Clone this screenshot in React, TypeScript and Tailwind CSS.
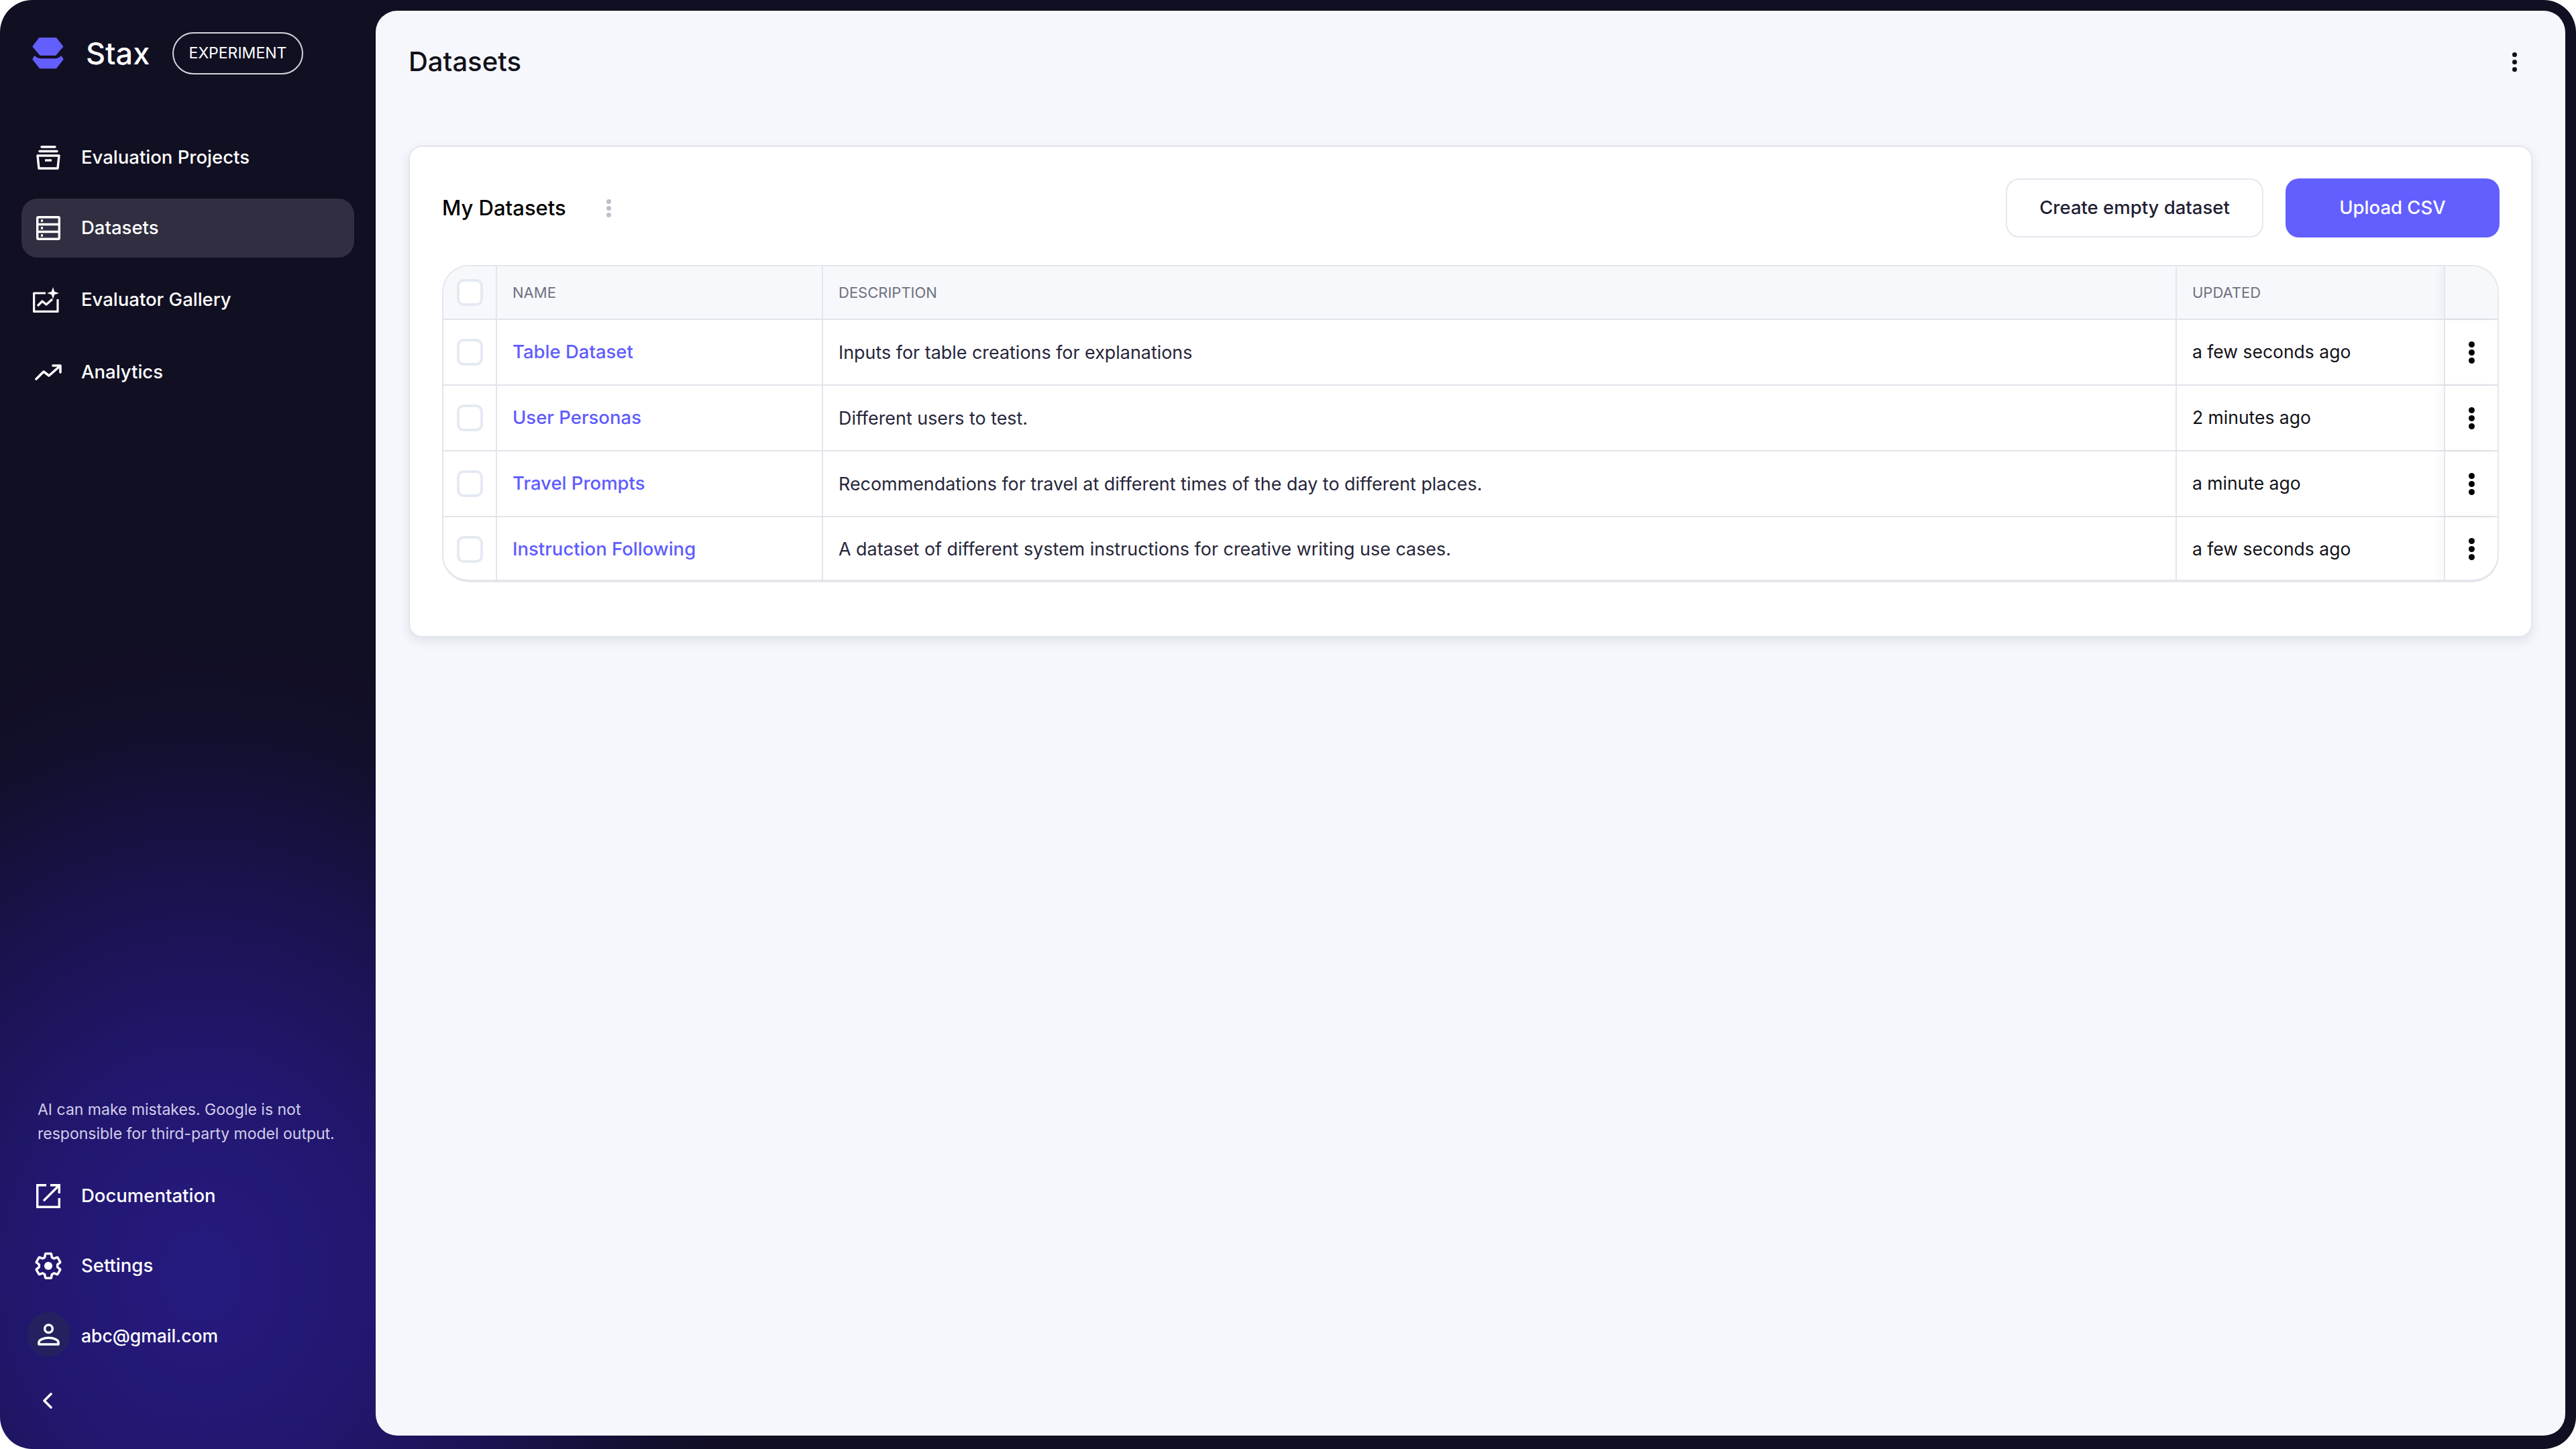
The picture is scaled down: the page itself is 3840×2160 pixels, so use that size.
const font = "font-['Inter','Liberation_Sans',sans-serif]";

const rows = [
  { name: 'Table Dataset', desc: 'Inputs for table creations for explanations', updated: 'a few seconds ago' },
  { name: 'User Personas', desc: 'Different users to test.', updated: '2 minutes ago' },
  { name: 'Travel Prompts', desc: 'Recommendations for travel at different times of the day to different places.', updated: 'a minute ago' },
  { name: 'Instruction Following', desc: 'A dataset of different system instructions for creative writing use cases.', updated: 'a few seconds ago' },
];

const Logo = () => (
  <svg width="47" height="47" viewBox="0 0 140 140" fill="#635ffe" stroke="#635ffe" strokeWidth="4" strokeLinejoin="round">
    <path d="M32 2H106L136 40L104 78H36L3 40Z" />
    <path d="M10 83C20 92 28 95 38 95H100C110 95 120 92 128 83L137 96L106 136H34L3 96Z" />
  </svg>
);

const ProjectsIcon = () => (
  <svg width="36" height="36" viewBox="0 0 36 36" fill="none" stroke="white" strokeWidth="3.4" strokeLinejoin="round">
    <path d="M8 2H28" strokeLinecap="round" />
    <path d="M5 8.5H31" strokeLinecap="round" />
    <path d="M2 15H34L32 34H4Z" />
    <path d="M13 22H23" />
  </svg>
);

const DatasetsIcon = () => (
  <svg width="36" height="36" viewBox="0 0 36 36" fill="none" stroke="white" strokeWidth="3.4">
    <rect x="1.7" y="1.7" width="32.6" height="32.6" rx="1.5" />
    <path d="M2 12.5H34M2 23.5H34" />
    <path d="M7 7H10M7 18H10M7 29H10" />
  </svg>
);

const GalleryIcon = () => (
  <svg width="40" height="38" viewBox="0 0 40 38" fill="none" stroke="white" strokeWidth="3.2" strokeLinejoin="round" className="-translate-x-[3px]">
    <path d="M19 9H1.6V36.4H37V18" />
    <path d="M7 28L14 21L20 26L29 18" />
    <path d="M30 0L32.2 6.8L39 9L32.2 11.2L30 18L27.8 11.2L21 9L27.8 6.8Z" fill="white" stroke="none" />
  </svg>
);

const AnalyticsIcon = () => (
  <svg width="40" height="24" viewBox="0 0 40 24" fill="none" stroke="white" strokeWidth="3.6" strokeLinecap="round" strokeLinejoin="round">
    <path d="M2 22L13 11L21 17L37 3" />
    <path d="M27 2H38V12" />
  </svg>
);

const DocsIcon = () => (
  <svg width="36" height="36" viewBox="0 0 36 36" fill="none" stroke="white" strokeWidth="3.4">
    <path d="M15 1.7H1.7V34.3H34.3V21" />
    <path d="M12 24L32 4" strokeLinecap="round" />
    <path d="M21 1.7H34.3V14" />
  </svg>
);

const SettingsIcon = () => (
  <svg width="40" height="40" viewBox="1.5 1.5 21 21" fill="none" stroke="white" strokeWidth="1.8" strokeLinejoin="round">
    <path d="M19.14 12.94c.04-.3.06-.61.06-.94 0-.32-.02-.64-.07-.94l2.03-1.58a.49.49 0 0 0 .12-.61l-1.92-3.32a.488.488 0 0 0-.59-.22l-2.39.96c-.5-.38-1.03-.7-1.62-.94l-.36-2.54a.484.484 0 0 0-.48-.41h-3.84c-.24 0-.43.17-.47.41l-.36 2.54c-.59.24-1.13.57-1.62.94l-2.39-.96c-.22-.08-.47 0-.59.22L2.74 8.87c-.12.21-.08.47.12.61l2.03 1.58c-.05.3-.09.63-.09.94s.02.64.07.94l-2.03 1.58a.49.49 0 0 0-.12.61l1.92 3.32c.12.22.37.29.59.22l2.39-.96c.5.38 1.03.7 1.62.94l.36 2.54c.05.24.24.41.48.41h3.84c.24 0 .44-.17.47-.41l.36-2.54c.59-.24 1.13-.56 1.62-.94l2.39.96c.22.08.47 0 .59-.22l1.92-3.32c.12-.22.07-.47-.12-.61l-2.01-1.58z" />
    <circle cx="12" cy="12" r="3.2" fill="white" stroke="none" />
  </svg>
);

const UserIcon = () => (
  <svg width="33" height="33" viewBox="0 0 34 34" fill="none" stroke="white" strokeWidth="3.6">
    <circle cx="17" cy="8" r="6" />
    <path d="M2 32V29C2 25 9 22 17 22C25 22 32 25 32 29V32Z" strokeLinejoin="round" />
  </svg>
);

const Chevron = () => (
  <svg width="16" height="24" viewBox="0 0 16 24" fill="none" stroke="white" strokeWidth="3.6" strokeLinecap="round" strokeLinejoin="round">
    <path d="M13 2L3 12L13 22" />
  </svg>
);

const Dots = ({ size, gap, color }: { size: string; gap: string; color: string }) => (
  <div className={`flex flex-col items-center ${gap}`}>
    <span className={`block rounded-full ${size} ${color}`} />
    <span className={`block rounded-full ${size} ${color}`} />
    <span className={`block rounded-full ${size} ${color}`} />
  </div>
);

const NavItem = ({ icon, label, className }: { icon: React.ReactNode; label: string; className?: string }) => (
  <div className={`flex items-center h-[88px] mx-[32px] pl-[16px] rounded-[24px] ${className ?? ''}`}>
    <div className="w-[48px] flex justify-center shrink-0">{icon}</div>
    <span className="ml-[25px] text-[27.5px] font-medium text-white whitespace-nowrap">{label}</span>
  </div>
);

const Checkbox = () => <div className="w-[39px] h-[40px] rounded-[10px] border-[4px] border-[#e5eaf2] bg-white" />;

export default function App() {
  return (
    <div className="w-[3840px] h-[2160px] bg-white overflow-hidden">
      <div
        className={`${font} w-full h-full flex rounded-[48px] bg-[#110f22] bg-[radial-gradient(ellipse_1000px_1150px_at_300px_1900px,#261a80_0%,#21176e_27%,#1a1350_49%,#120f2c_71%,#110f22_85%)]`}
      >
        {/* sidebar */}
        <aside className="w-[560px] shrink-0 flex flex-col">
          <div className="flex items-center h-[63px] mt-[48px] pl-[48px]">
            <Logo />
            <span className="ml-[33px] w-[96px] text-[45px] font-medium text-white leading-none">Stax</span>
            <span className="ml-[33px] h-[63px] w-[195px] flex items-center justify-center rounded-full border-2 border-[#d4d4dc] text-[23px] text-white">
              EXPERIMENT
            </span>
          </div>

          <nav className="mt-[80px] flex flex-col">
            <NavItem icon={<ProjectsIcon />} label="Evaluation Projects" />
            <NavItem icon={<DatasetsIcon />} label="Datasets" className="mt-[17px] bg-[#302e40]" />
            <NavItem icon={<GalleryIcon />} label="Evaluator Gallery" className="mt-[19px]" />
            <NavItem icon={<AnalyticsIcon />} label="Analytics" className="mt-[20px]" />
          </nav>

          <div className="mt-auto flex flex-col">
            <p className="ml-[56px] w-[480px] text-[23px] leading-[36px] text-[#d2cdea]">
              AI can make mistakes. Google is not responsible for third-party model output.
            </p>
            <NavItem icon={<DocsIcon />} label="Documentation" className="mt-[31px]" />
            <NavItem icon={<SettingsIcon />} label="Settings" className="mt-[16px]" />
            <div className="flex items-center h-[66px] mt-[25px] ml-[41px]">
              <div className="w-[63px] h-[66px] rounded-full bg-[#25215f] flex items-center justify-center">
                <UserIcon />
              </div>
              <span className="ml-[17px] pt-[6px] text-[26.5px] font-medium text-white">abc@gmail.com</span>
            </div>
            <div className="mt-[54px] mb-[60px] ml-[63px]">
              <Chevron />
            </div>
          </div>
        </aside>

        {/* main panel */}
        <main className="flex-1 mt-[16px] mb-[20px] mr-[16px] rounded-[32px] bg-[#f6f7fc] flex flex-col pl-[49px] pr-[49px]">
          <header className="flex items-center justify-between h-[152px]">
            <h1 className="text-[40px] font-medium text-[#111118] leading-none">Datasets</h1>
            <div className="mr-[23px]">
              <Dots size="w-[7px] h-[7px]" gap="gap-[4px]" color="bg-[#111118]" />
            </div>
          </header>

          <section className="mt-[49px] h-[733px] rounded-[20px] border-2 border-[#e4e6ee] bg-white shadow-[0_6px_16px_rgba(30,35,70,0.10)] px-[48px]">
            <div className="flex items-center justify-between h-[176px] pt-[6px]">
              <div className="flex items-center">
                <h2 className="text-[31px] font-medium text-black">My Datasets</h2>
                <div className="ml-[60px]">
                  <Dots size="w-[7px] h-[7px]" gap="gap-[3px]" color="bg-[#bfbfca]" />
                </div>
              </div>
              <div className="flex items-center gap-[33px] mr-[-1px]">
                <button className="h-[88px] w-[384px] rounded-[20px] border-2 border-[#e4e8f0] bg-white text-[27.5px] font-medium text-[#1f2033]">
                  Create empty dataset
                </button>
                <button className="h-[88px] w-[319px] rounded-[20px] bg-[#635ffe] text-[27.5px] font-medium text-white">
                  Upload CSV
                </button>
              </div>
            </div>

            <div className="h-[473px] rounded-[40px] border-2 border-[#e4e6ec] border-b-[4px] overflow-hidden">
              <div className="grid grid-cols-[78px_486px_1fr_400px_80px] h-[80px] bg-[#f7f8fc] border-b-2 border-[#e2e4ea] text-[22px] text-[#6f7180]">
                <div className="flex items-center justify-center">
                  <Checkbox />
                </div>
                <div className="flex items-center border-l-2 border-[#e4e6ec] pl-[23px]">NAME</div>
                <div className="flex items-center border-l-2 border-[#e4e6ec] pl-[23px]">DESCRIPTION</div>
                <div className="flex items-center border-l-2 border-[#e4e6ec] pl-[23px]">UPDATED</div>
                <div className="border-l-2 border-[#e4e6ec] shadow-[-8px_0_12px_rgba(30,35,70,0.03)]" />
              </div>
              {rows.map((row, idx) => (
                <div
                  key={row.name}
                  className={`grid grid-cols-[78px_486px_1fr_400px_80px] text-[27px] ${idx < rows.length - 1 ? 'h-[98px] border-b-2 border-[#e2e4ea]' : 'h-[95px]'}`}
                >
                  <div className="flex items-center justify-center">
                    <Checkbox />
                  </div>
                  <div className="flex items-center border-l-2 border-[#e4e6ec] pl-[23px] text-[27.5px] text-[#5f5cff] font-medium">
                    {row.name}
                  </div>
                  <div className="flex items-center border-l-2 border-[#e4e6ec] pl-[23px] text-[26.9px] text-[#26263a]">{row.desc}</div>
                  <div className="flex items-center border-l-2 border-[#e4e6ec] pl-[23px] text-[26.5px] text-[#111118]">{row.updated}</div>
                  <div className="flex items-center justify-center border-l-2 border-[#e4e6ec] shadow-[-8px_0_12px_rgba(30,35,70,0.03)]">
                    <Dots size="w-[9px] h-[9px]" gap="gap-[3px]" color="bg-black" />
                  </div>
                </div>
              ))}
            </div>
          </section>
        </main>
      </div>
    </div>
  );
}
